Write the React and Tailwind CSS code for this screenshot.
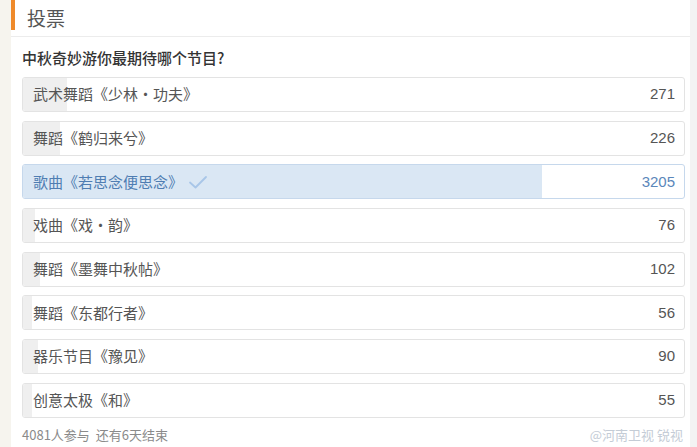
import React from "react";

const options = [
  { label: "武术舞蹈《少林·功夫》", votes: 271 },
  { label: "舞蹈《鹤归来兮》", votes: 226 },
  { label: "歌曲《若思念便思念》", votes: 3205, chosen: true },
  { label: "戏曲《戏·韵》", votes: 76 },
  { label: "舞蹈《墨舞中秋帖》", votes: 102 },
  { label: "舞蹈《东都行者》", votes: 56 },
  { label: "器乐节目《豫见》", votes: 90 },
  { label: "创意太极《和》", votes: 55 },
];

const total = 4081;

const OptionRow = ({ label, votes, chosen }) => {
  const pct = (votes / total) * 100;
  return (
    <div
      className={`relative h-[35px] rounded-[3px] border overflow-hidden ${
        chosen ? "border-[#c6d8ec] bg-white" : "border-[#e3e3e3] bg-white"
      }`}
    >
      {/* vote share bar */}
      <div
        className={`absolute inset-y-0 left-0 ${chosen ? "bg-[#dae7f4]" : "bg-[#efefef]"}`}
        style={{ width: `${pct}%` }}
      />
      <div className="relative h-full flex items-center justify-between pl-[10px] pr-[9px]">
        <div className="flex items-center gap-[5px]">
          <span className={`text-[15px] ${chosen ? "text-[#4f7db2]" : "text-[#555]"}`}>
            {label}
          </span>
          {chosen && (
            <svg width="20" height="16" viewBox="0 0 20 16" fill="none">
              <path
                d="M2 8.5 L7.5 13.5 L18 3"
                stroke="#a8c6e8"
                strokeWidth="1.8"
                strokeLinecap="round"
                strokeLinejoin="round"
              />
            </svg>
          )}
        </div>
        <span
          className={`text-[15px] font-medium ${chosen ? "text-[#5b87ba]" : "text-[#555]"}`}
          style={{ fontFamily: '"Liberation Sans", Arial, sans-serif' }}
        >
          {votes}
        </span>
      </div>
    </div>
  );
};

const App = () => {
  return (
    <div
      className="w-[697px] h-[447px] flex bg-[#f6f4ee] overflow-hidden"
      style={{ fontFamily: '"Noto Sans CJK SC", "Noto Sans", sans-serif' }}
    >
      {/* left margin strip */}
      <div className="w-[11px] shrink-0" />

      {/* Poll card */}
      <div className="w-[679px] shrink-0 bg-white">
        {/* Header */}
        <div className="h-[37px] flex items-center border-b border-[#ececec]">
          <div className="w-[4px] h-[30px] self-start bg-[#ef8a2a]" />
          <span className="ml-[12px] text-[19px] text-[#555] leading-none -mt-[2px]">投票</span>
        </div>

        <div className="pl-[11px] pr-[5px]">
          <div className="pt-[10px] text-[15px] leading-[21px] font-medium text-[#333]">
            中秋奇妙游你最期待哪个节目?
          </div>

          <div className="mt-[9px] flex flex-col gap-[8.7px]">
            {options.map((o) => (
              <OptionRow key={o.label} {...o} />
            ))}
          </div>

          <div className="mt-[8px] flex items-center justify-between text-[13px] leading-[18px]">
            <span className="text-[#8a8a8a]">4081人参与&nbsp;&nbsp;还有6天结束</span>
            <span className="text-[#c4ccd6] mr-[2px]">@河南卫视 锐视</span>
          </div>
        </div>
      </div>

      {/* right margin strip */}
      <div className="flex-1 bg-[#f3f3f3]" />
    </div>
  );
};

export default App;
